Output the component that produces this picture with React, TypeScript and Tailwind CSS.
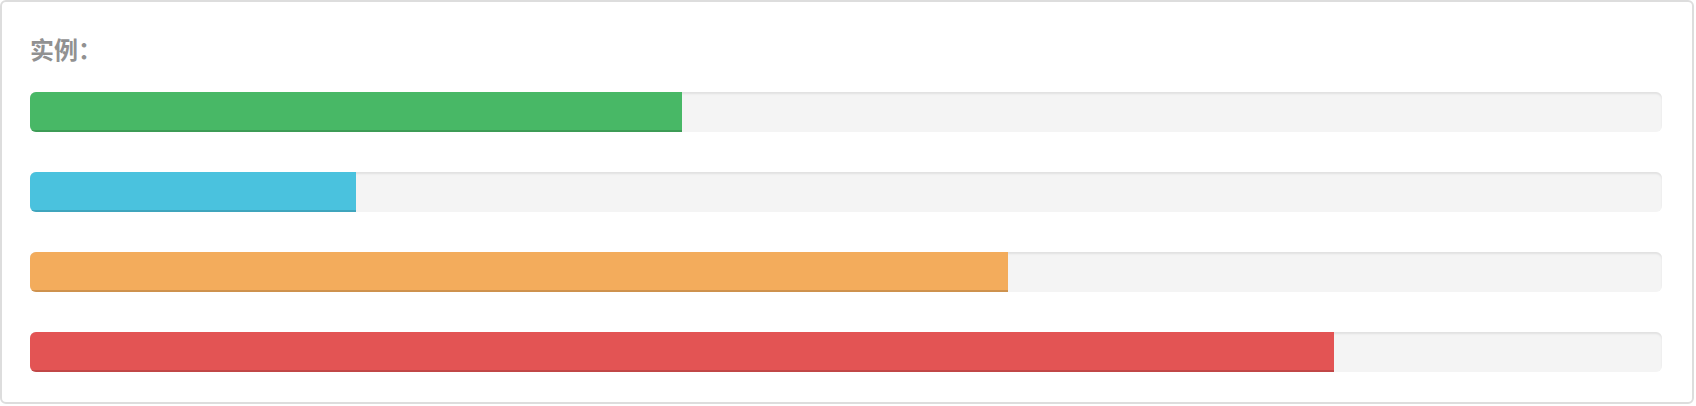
const bars = [
  { w: 652, cls: 'bg-[#48b866]' },
  { w: 326, cls: 'bg-[#4ac2de]' },
  { w: 978, cls: 'bg-[#f3ac5c]' },
  { w: 1304, cls: 'bg-[#e35454]' },
];

export default function App() {
  return (
    <div className="w-[1696px] h-[406px] bg-white">
      <div className="w-[1694px] h-[404px] border-2 border-[#dddddd] rounded-[6px] pt-[33px] pl-[28px] pr-[30px]">
        <h4 className="text-[24px] leading-[28px] font-bold text-[#919191] font-['Noto_Sans_CJK_SC',sans-serif]">实例：</h4>
        <div className="mt-[29px] flex flex-col gap-[40px]">
          {bars.map((b, i) => (
            <div key={i} className="h-[40px] rounded-[6px] bg-[#f4f4f4] overflow-hidden shadow-[inset_0_2px_2px_rgba(0,0,0,0.08)]">
              <div className={`h-full ${b.cls} shadow-[inset_0_-2px_0_rgba(0,0,0,0.15)]`} style={{ width: `${b.w}px` }} />
            </div>
          ))}
        </div>
      </div>
    </div>
  );
}
